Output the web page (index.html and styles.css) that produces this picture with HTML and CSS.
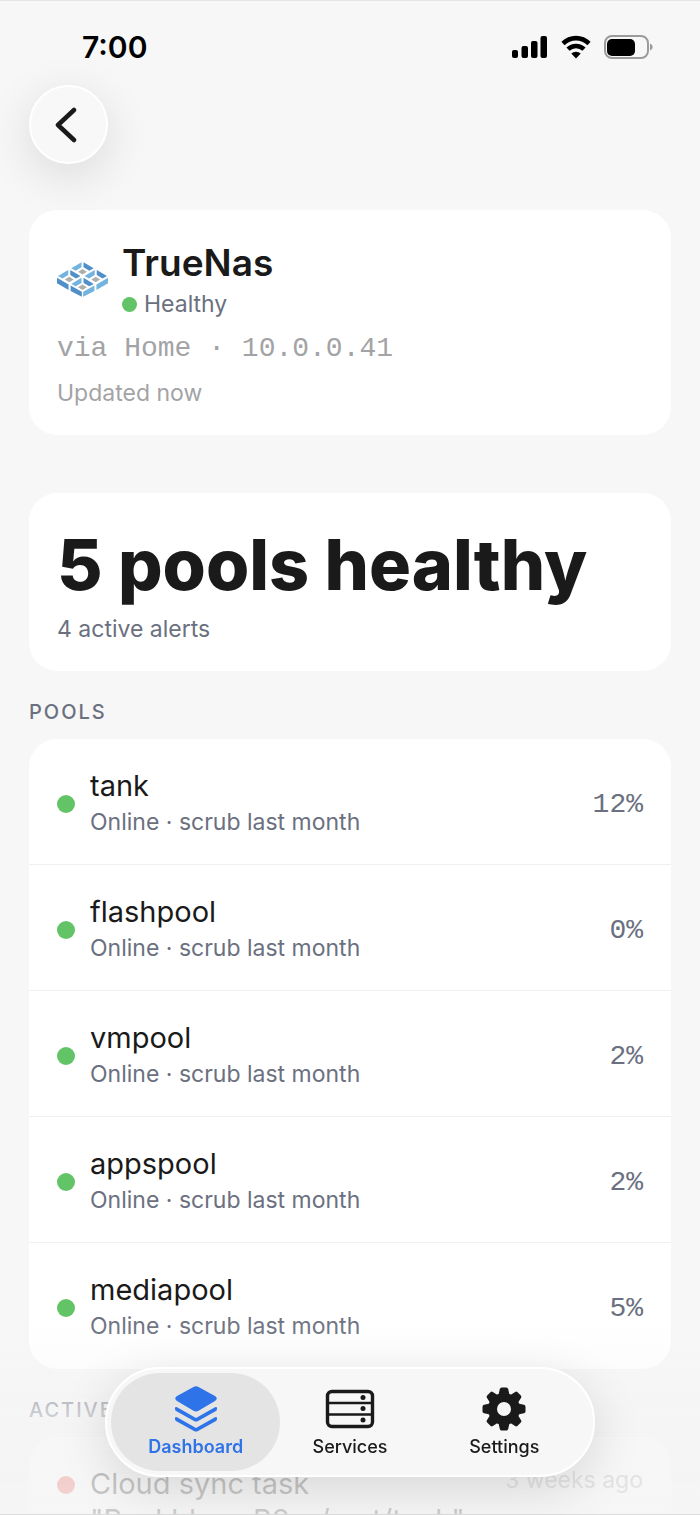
FILE: index.html
```html
<!-- index.html -->
<!DOCTYPE html>
<html lang="en">
<head>
    <meta charset="UTF-8">
    <meta name="viewport" content="width=device-width, initial-scale=1.0">
    <title>TrueNas</title>
    <link rel="stylesheet" href="styles.css">
</head>
<body>
    <!-- Status Bar -->
    <div class="status-bar">
        <span class="status-time">7:00</span>
        <div class="status-icons">
            <svg width="36" height="24" viewBox="0 0 36 24">
                <rect x="0" y="15" width="6" height="8" rx="2"/>
                <rect x="9.500" y="11" width="6.500" height="12" rx="2"/>
                <rect x="19" y="6" width="6.500" height="17" rx="2"/>
                <rect x="28.500" y="1" width="6.500" height="22" rx="2"/>
            </svg>
            <svg width="30" height="24" viewBox="0 0 30 24">
                <path d="M2 8.500A18.500 18.500 0 0 1 28 8.500" fill="none" stroke="#000" stroke-width="4.600"/>
                <path d="M7 14.200A11.500 11.500 0 0 1 23 14.200" fill="none" stroke="#000" stroke-width="4.600"/>
                <path d="M15 23.500L10.300 18.600A6.600 6.600 0 0 1 19.700 18.600Z"/>
            </svg>
            <svg width="49" height="24" viewBox="0 0 49 24">
                <rect x="1" y="1" width="43" height="22" rx="7" fill="none" stroke="#9b9b9b" stroke-width="2"/>
                <rect x="3" y="4" width="28" height="17" rx="5"/>
                <path d="M46 8.500C49.500 10 49.500 14 46 15.500Z" fill="#9b9b9b"/>
            </svg>
        </div>
    </div>

    <button class="back-button" type="button" aria-label="Back">
        <svg width="24" height="36" viewBox="0 0 24 36">
            <path d="M20 3L4 18L20 33" fill="none" stroke="#1a1a1a" stroke-width="4.500" stroke-linecap="round" stroke-linejoin="round"/>
        </svg>
    </button>

    <main>
        <!-- Service Header -->
        <section class="card">
            <div class="service-header">
                <svg width="51" height="35" viewBox="0 0 150 102">
                    <defs>
                        <g id="cell">
                            <path d="M-3 -28V-13L-20 -3L-33 -10Z" fill="#72b3df"/>
                            <path d="M3 -28V-13L20 -3L33 -10Z" fill="#508fc8"/>
                            <path d="M0 -8L13 0L0 8L-13 0Z" fill="#aeafab"/>
                        </g>
                    </defs>
                    <use href="#cell" x="75" y="28"/>
                    <use href="#cell" x="36" y="51"/>
                    <use href="#cell" x="114" y="51"/>
                    <use href="#cell" x="75" y="74"/>
                    <path d="M0 46L34 66V82L0 62ZM40 69L73 87V102L40 85Z" fill="#508fc8"/>
                    <path d="M150 46L116 66V82L150 62ZM110 69L77 87V102L110 85Z" fill="#72b3df"/>
                </svg>
                <div>
                    <h1 class="service-name">TrueNas</h1>
                    <p class="service-status"><span class="dot small"></span>Healthy</p>
                </div>
            </div>
            <p class="service-route">via Home · 10.0.0.41</p>
            <p class="service-updated">Updated now</p>
        </section>

        <!-- Summary -->
        <section class="card summary">
            <h2 class="summary-title">5 pools healthy</h2>
            <p class="summary-text">4 active alerts</p>
        </section>

        <!-- Pools -->
        <h3 class="section-title">Pools</h3>
        <ul class="list">
            <li class="row">
                <span class="dot"></span>
                <div class="row-text">
                    <p class="row-name">tank</p>
                    <p class="row-detail">Online · scrub last month</p>
                </div>
                <span class="row-value">12%</span>
            </li>
            <li class="row">
                <span class="dot"></span>
                <div class="row-text">
                    <p class="row-name">flashpool</p>
                    <p class="row-detail">Online · scrub last month</p>
                </div>
                <span class="row-value">0%</span>
            </li>
            <li class="row">
                <span class="dot"></span>
                <div class="row-text">
                    <p class="row-name">vmpool</p>
                    <p class="row-detail">Online · scrub last month</p>
                </div>
                <span class="row-value">2%</span>
            </li>
            <li class="row">
                <span class="dot"></span>
                <div class="row-text">
                    <p class="row-name">appspool</p>
                    <p class="row-detail">Online · scrub last month</p>
                </div>
                <span class="row-value">2%</span>
            </li>
            <li class="row">
                <span class="dot"></span>
                <div class="row-text">
                    <p class="row-name">mediapool</p>
                    <p class="row-detail">Online · scrub last month</p>
                </div>
                <span class="row-value">5%</span>
            </li>
        </ul>

        <!-- Alerts -->
        <h3 class="section-title">Active alerts</h3>
        <ul class="list">
            <li class="row alert-row">
                <span class="dot error"></span>
                <p class="row-text row-name">Cloud sync task<br>"Backblaze B2 - /mnt/tank"</p>
                <span class="alert-time">3 weeks ago</span>
            </li>
        </ul>
    </main>

    <div class="bottom-fade"></div>

    <!-- Tab Bar -->
    <nav class="tab-bar">
        <a class="tab active" href="#dashboard">
            <svg width="44" height="48" viewBox="0 0 44 48" fill="#2f73e8">
                <path d="M19.500 2Q22 .600 24.500 2L41 11Q44.500 13.500 41 16L24.500 25.800Q22 27.200 19.500 25.800L3 16Q-.500 13.500 3 11Z"/>
                <path d="M1 22.500Q2 21.500 3.500 22.500L22 33L40.500 22.500Q42 21.500 43 22.500V24Q43 25.300 42 26L24 36Q22 37 20 36L2 26Q1 25.300 1 24Z"/>
                <path d="M1 32.500Q2 31.500 3.500 32.500L22 43L40.500 32.500Q42 31.500 43 32.500V34Q43 35.300 42 36L24 46Q22 47 20 46L2 36Q1 35.300 1 34Z"/>
            </svg>
            Dashboard
        </a>
        <a class="tab" href="#services">
            <svg width="50" height="48" viewBox="0 0 50 48" fill="#1a1a1a">
                <g fill="none" stroke="#1a1a1a">
                    <rect x="2.500" y="6.500" width="45" height="35" rx="4.500" stroke-width="3.400"/>
                    <path d="M2 18H48M2 29.500H48" stroke-width="2.500"/>
                </g>
                <circle cx="38" cy="12.500" r="2.500"/>
                <circle cx="38" cy="23.500" r="2.500"/>
                <circle cx="38" cy="35" r="2.500"/>
            </svg>
            Services
        </a>
        <a class="tab" href="#settings">
            <svg width="44" height="48" viewBox="-22 -24 44 48" fill="#1a1a1a">
                <defs>
                    <path id="tooth" d="M-5.500 -14L-4.200 -20Q-3.800 -21.500 -2.300 -21.500H2.300Q3.800 -21.500 4.200 -20L5.500 -14Z"/>
                </defs>
                <circle r="11.500" fill="none" stroke="#1a1a1a" stroke-width="9"/>
                <use href="#tooth"/>
                <use href="#tooth" transform="rotate(45)"/>
                <use href="#tooth" transform="rotate(90)"/>
                <use href="#tooth" transform="rotate(135)"/>
                <use href="#tooth" transform="rotate(180)"/>
                <use href="#tooth" transform="rotate(225)"/>
                <use href="#tooth" transform="rotate(270)"/>
                <use href="#tooth" transform="rotate(315)"/>
            </svg>
            Settings
        </a>
    </nav>
</body>
</html>
```

FILE: styles.css
```css
/* Reset and base styles */
* {
    margin: 0;
    padding: 0;
    box-sizing: border-box;
}

body {
    background-color: #f7f7f7;
    color: #1a1a1a;
    font-family: 'Inter', sans-serif;
    height: 100vh;
    overflow: hidden;
    padding: 0 29px;
    border-top: 1px solid #e5e5e5;
    border-bottom: 1px solid #dcdcdc;
}

svg {
    display: block;
    flex: none;
}

/* Status bar */
.status-bar {
    display: flex;
    justify-content: space-between;
    align-items: center;
    height: 84px;
    padding: 8px 18px 0 53px;
}

.status-time {
    color: #000;
    font-size: 30px;
    font-weight: 600;
}

.status-icons {
    display: flex;
    align-items: center;
    gap: 13px;
}

.back-button {
    display: flex;
    justify-content: center;
    align-items: center;
    width: 79px;
    height: 79px;
    padding-right: 6px;
    margin-bottom: 46px;
    background-color: #f8f8f8;
    border: 2px solid #fff;
    border-radius: 50%;
    box-shadow: 0 12px 48px rgba(0, 0, 0, 0.12);
    cursor: pointer;
}

/* Card styles */
.card {
    background-color: #fff;
    border-radius: 28px;
    padding: 28px 28px 26px;
}

.service-header {
    display: flex;
    align-items: center;
    gap: 14px;
}

.service-name {
    font-size: 37px;
    font-weight: 600;
    line-height: 50px;
}

.service-status {
    display: flex;
    align-items: center;
    gap: 7px;
    color: #6b7080;
    font-size: 23px;
    line-height: 32px;
}

.service-route {
    margin-top: 12px;
    color: #a3a3a6;
    font-family: 'Liberation Mono', monospace;
    font-size: 28px;
    line-height: 34px;
}

.service-updated {
    margin-top: 11px;
    color: #a3a3a6;
    font-size: 23px;
    line-height: 32px;
}

.summary {
    margin-top: 58px;
}

.summary-title {
    font-size: 70px;
    font-weight: 800;
    line-height: 88px;
}

.summary-text {
    margin-top: 4px;
    color: #6b7080;
    font-size: 23px;
    line-height: 32px;
}

/* Status dots */
.dot {
    flex: none;
    width: 18px;
    height: 18px;
    border-radius: 50%;
    background-color: #62c466;
}

.dot.small {
    width: 15px;
    height: 15px;
}

.dot.error {
    background-color: #eb4b3d;
}

/* List styles */
.section-title {
    margin: 29px 0 15px;
    color: #6b7080;
    font-size: 20px;
    font-weight: 500;
    line-height: 24px;
    letter-spacing: 2px;
    text-transform: uppercase;
}

.list {
    background-color: #fff;
    border-radius: 28px;
    list-style: none;
}

.row {
    display: flex;
    align-items: center;
    gap: 15px;
    padding: 29px 28px 24px;
    border-bottom: 1px solid #f0f0f1;
}

.row:last-child {
    border-bottom-color: transparent;
}

.row-text {
    flex: 1;
}

.row-name {
    font-size: 29px;
    line-height: 36px;
}

.row-detail {
    color: #6b7080;
    font-size: 23px;
    line-height: 36px;
}

.row-value {
    color: #6b7080;
    font-family: 'Liberation Mono', monospace;
    font-size: 28px;
}

.alert-row {
    align-items: flex-start;
}

.alert-row .dot {
    margin-top: 10px;
}

.alert-time {
    color: #a3a3a6;
    font-size: 23px;
    line-height: 28px;
}

/* Fades the page out below the tab bar */
.bottom-fade {
    position: fixed;
    left: 0;
    right: 0;
    bottom: 1px;
    height: 200px;
    background: linear-gradient(rgba(244, 244, 244, 0), rgba(244, 244, 244, 0.15) 40px, rgba(244, 244, 244, 0.7) 100px, rgba(244, 244, 244, 0.82));
}

/* Tab bar */
.tab-bar {
    position: fixed;
    bottom: 38px;
    left: 15%;
    right: 15%;
    display: flex;
    padding: 4px;
    background-color: #f7f7f7;
    border: 2px solid #fff;
    border-radius: 56px;
    box-shadow: 0 12px 50px rgba(0, 0, 0, 0.13);
}

.tab {
    flex: 1;
    display: flex;
    flex-direction: column;
    align-items: center;
    gap: 2px;
    height: 98px;
    padding-top: 12px;
    border-radius: 49px;
    color: #1a1a1a;
    font-size: 18px;
    font-weight: 500;
    line-height: 24px;
    text-decoration: none;
}

.tab + .tab {
    margin-left: -15px;
}

.tab.active {
    background-color: #e4e4e4;
    color: #2f73e8;
    font-weight: 600;
}
```
